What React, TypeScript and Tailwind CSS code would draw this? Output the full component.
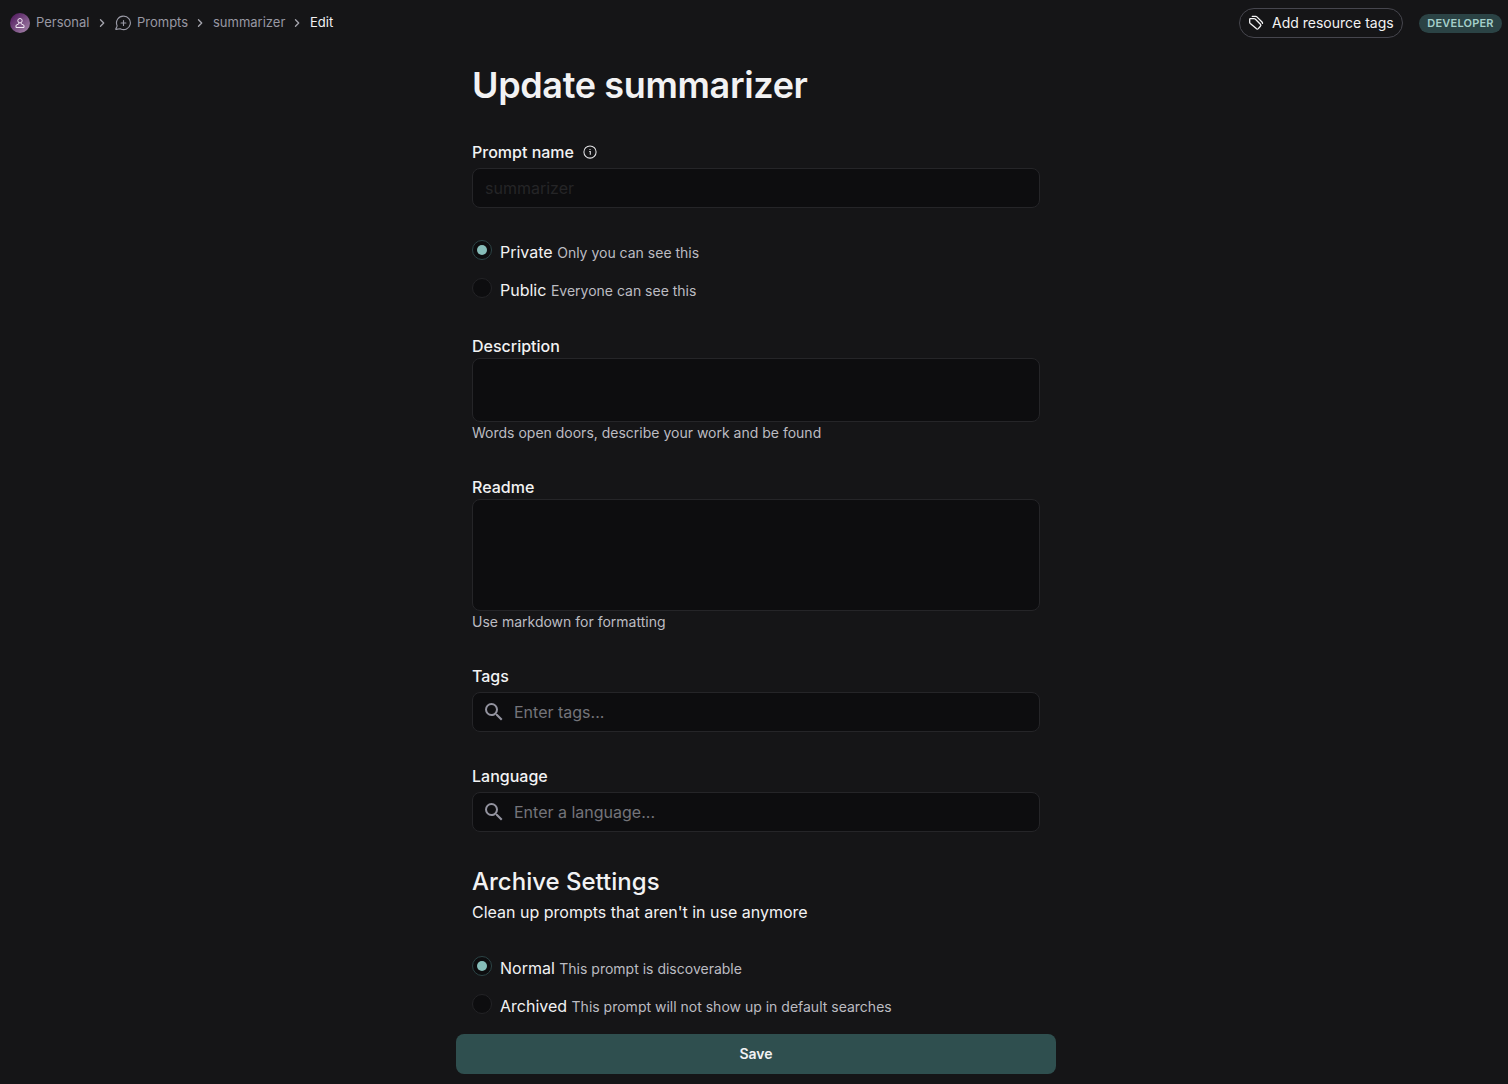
import React from "react";
import { MdSearch } from "react-icons/md";

function Chevron() {
  return (
    <svg className="h-4 w-4 shrink-0" viewBox="0 0 16 16" fill="none" stroke="#a5a5ad" strokeWidth="1.35" strokeLinecap="round" strokeLinejoin="round">
      <path d="M6.5 4.8 9.7 8l-3.2 3.2" />
    </svg>
  );
}

function PersonalAvatar() {
  return (
    <span className="flex h-5 w-5 items-center justify-center rounded-full bg-linear-to-br from-[#4a0d58] to-[#a888ac]">
      <svg className="h-3 w-3" viewBox="0 0 12 12" fill="none" stroke="#f3eaf5" strokeWidth="1" strokeLinejoin="round">
        <circle cx="6" cy="3.7" r="2.2" />
        <path d="M4.8 5.7v1.2L2 8.3v2.2h8V8.3L7.2 6.9V5.7" />
      </svg>
    </span>
  );
}

function PromptIcon() {
  return (
    <svg className="h-4 w-4" viewBox="0 0 16 16" fill="none" stroke="#9a9aa6" strokeWidth="1.15" strokeLinecap="round" strokeLinejoin="round">
      <path d="M8.5 1.2a6.7 6.7 0 1 1-2.8 12.7c-.3-.1-.5-.1-.8-.1L1.2 14.4c-.3 0-.5-.2-.4-.5L2 11.2c.1-.3.1-.5 0-.8A6.7 6.7 0 0 1 8.5 1.2Z" />
      <path d="M8.5 5.6v4.8M6.1 8h4.8" />
    </svg>
  );
}

function TagsIcon() {
  return (
    <svg className="h-4 w-4" viewBox="0 0 16 16" fill="none" stroke="#f4f4f5" strokeWidth="1.3" strokeLinecap="round" strokeLinejoin="round">
      <path d="M2.5 3.6h3.6c.4 0 .8.2 1.1.4l5.2 5.3c.6.6.6 1.4 0 2l-2.1 2.3c-.6.6-1.4.6-2 0L2.300 8.500c-.4-.4-.6-.8-.6-1.300V4.400c0-.5.3-.8.8-.8Z" />
      <path d="M4.300 1.400h3.400c.5 0 .9.2 1.200.5l5.100 5.100c.4.4.6.9.5 1.400" />
    </svg>
  );
}

function InfoIcon() {
  return (
    <svg className="h-4 w-4" viewBox="0 0 16 16" fill="none" stroke="#e4e4e7" strokeWidth="1.05">
      <circle cx="8" cy="8" r="6.1" />
      <path d="M7.2 7.5H8.3v3.3M8 5v1.1" />
    </svg>
  );
}

function RadioRow({ checked, label, hint }: { checked?: boolean; label: string; hint: string }) {
  return (
    <label className="flex h-6 items-start">
      <span className={`flex h-5 w-5 items-center justify-center rounded-full border bg-[#0d0d0f] ${checked ? "border-[#2c4446]" : "border-[#232326]"}`}>
        {checked && <span className="h-2.5 w-2.5 rounded-full bg-[#86bdb9]" />}
      </span>
      <span className="ml-2 text-base leading-6">
        {label} <span className="text-sm text-[#bcbcc2]">{hint}</span>
      </span>
    </label>
  );
}

function Label({ children }: { children: React.ReactNode }) {
  return <div className="flex h-6 items-center text-base font-medium leading-6">{children}</div>;
}

function SearchField({ placeholder }: { placeholder: string }) {
  return (
    <div className="mt-1 flex h-10 items-center rounded-lg border border-[#252528] bg-[#0d0d0f] pl-[9px]">
      <MdSearch className="h-6 w-6 text-[#93939f]" />
      <span className="ml-2 text-base text-[#74747a]">{placeholder}</span>
    </div>
  );
}

export default function App() {
  return (
    <div className="flex h-[1084px] flex-col overflow-hidden bg-[#151517] font-['Inter',sans-serif] text-[#f2f2f3]">
      <header className="flex h-[46px] shrink-0 items-center justify-between pl-2.5 pr-1.5">
        <nav className="flex items-center text-[13px] leading-5 text-[#9898a3]">
          <PersonalAvatar />
          <span className="mb-0.5 ml-1.5 mr-1 w-[54px]">Personal</span>
          <Chevron />
          <span className="ml-[5px] mr-1.5"><PromptIcon /></span>
          <span className="mb-0.5 mr-1 w-[51px]">Prompts</span>
          <Chevron />
          <span className="mb-0.5 ml-[5px] mr-1 w-[72px]">summarizer</span>
          <Chevron />
          <span className="mb-0.5 ml-[5px] text-[#f2f2f3]">Edit</span>
        </nav>
        <div className="flex items-center gap-4">
          <button className="flex h-[30px] w-[164px] items-center rounded-full border border-[#46464e] pl-2 text-sm">
            <TagsIcon />
            <span className="ml-2 whitespace-nowrap">Add resource tags</span>
          </button>
          <span className="flex h-[19px] w-[83px] items-center justify-center rounded-full bg-[#2b4345] text-[11px] font-semibold tracking-[0.2px] text-[#a4cfca]">DEVELOPER</span>
        </div>
      </header>

      <div className="flex justify-center pl-1">
        <main className="flex w-[568px] flex-col">
          <h1 className="mt-4 text-4xl font-semibold leading-[46px] tracking-[-0.35px]">Update summarizer</h1>

          <section className="mt-8">
            <Label>
              Prompt name <span className="ml-2"><InfoIcon /></span>
            </Label>
            <div className="mt-1 flex h-10 items-center rounded-lg border border-[#252528] bg-[#0d0d0f] px-3 text-base text-[#252527]">summarizer</div>
          </section>

          <section className="mt-8 flex flex-col gap-3.5">
            <RadioRow checked label="Private" hint="Only you can see this" />
            <RadioRow label="Public" hint="Everyone can see this" />
          </section>

          <section className="mt-8">
            <Label>Description</Label>
            <div className="h-16 rounded-lg border border-[#252528] bg-[#0d0d0f]" />
            <p className="text-sm leading-[21px] text-[#bcbcc2]">Words open doors, describe your work and be found</p>
          </section>

          <section className="mt-8">
            <Label>Readme</Label>
            <div className="h-28 rounded-lg border border-[#252528] bg-[#0d0d0f]" />
            <p className="text-sm leading-[21px] text-[#bcbcc2]">Use markdown for formatting</p>
          </section>

          <section className="mt-8">
            <Label>Tags</Label>
            <SearchField placeholder="Enter tags..." />
          </section>

          <section className="mt-8">
            <Label>Language</Label>
            <SearchField placeholder="Enter a language..." />
          </section>

          <section className="mt-8">
            <h2 className="text-2xl font-medium leading-9">Archive Settings</h2>
            <p className="text-base leading-6">Clean up prompts that aren't in use anymore</p>
          </section>

          <section className="mt-8 flex flex-col gap-3.5">
            <RadioRow checked label="Normal" hint="This prompt is discoverable" />
            <RadioRow label="Archived" hint="This prompt will not show up in default searches" />
          </section>

          <button className="-mx-4 mt-4 h-10 rounded-lg bg-[#2f4f4f] text-sm font-semibold">Save</button>
        </main>
      </div>
    </div>
  );
}
